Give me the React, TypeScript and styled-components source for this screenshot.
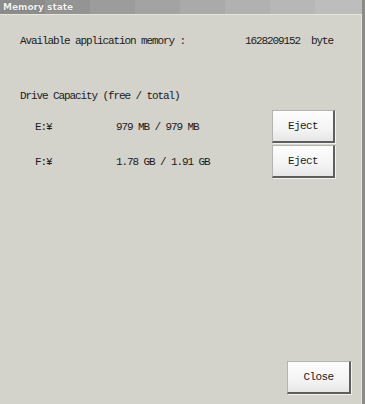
import React from 'react';
import styled, { createGlobalStyle } from 'styled-components';

const GlobalStyle = createGlobalStyle`
  html, body {
    margin: 0;
    padding: 0;
    background: #d4d3cb;
  }
`

const Window = styled.div`
  width: 365px;
  height: 404px;
  box-sizing: border-box;
  background: #d4d3cb;
  border-right: 3px solid #8a8a86;
  box-shadow: inset -1px 0 0 #e8e7e0;
  display: flex;
  flex-direction: column;
  font-family: "Liberation Mono", monospace;
  font-size: 11px;
  letter-spacing: -1.1px;
  color: #1a1a1a;
`

const TitleBar = styled.div`
  height: 14px;
  border-bottom: 1px solid #e6e5de;
  background: linear-gradient(to right,
    #8c8c8c 0 45px, #949494 45px 90px, #9c9c9c 90px 135px, #a3a3a3 135px 180px,
    #aaaaaa 180px 225px, #b1b1b1 225px 270px, #b7b7b7 270px 315px, #bdbdbd 315px);
  display: flex;
  align-items: center;
  padding-left: 3px;
  font-family: "DejaVu Sans", sans-serif;
  font-weight: bold;
  font-size: 9px;
  letter-spacing: 0;
  color: #f4f4f4;
  text-shadow: 0 0 1px #555;
`

const Body = styled.div`
  flex: 1;
  display: flex;
  flex-direction: column;
  padding: 19px 11px 8px 20px;
`

const MemoryRow = styled.div`
  display: flex;
  justify-content: space-between;
  height: 14px;
  line-height: 14px;
  padding-right: 18px;
`

const SectionTitle = styled.div`
  margin-top: 41px;
  height: 14px;
  line-height: 14px;
`

const DriveList = styled.div`
  display: flex;
  flex-direction: column;
  gap: 2px;
  margin-top: 7px;
`

const DriveRow = styled.div`
  display: flex;
  align-items: center;
  padding-left: 15px;
  padding-right: 16px;
`

const DriveName = styled.span`
  width: 81px;
`

const DriveSize = styled.span`
  flex: 1;
  padding-top: 1px;
`

const Button = styled.button<{ wide?: boolean }>`
  width: ${p => (p.wide ? '64px' : '63px')};
  height: 33px;
  box-sizing: border-box;
  padding: 0;
  font-family: "Liberation Mono", monospace;
  font-size: 11px;
  letter-spacing: -0.6px;
  color: #1a1a1a;
  background: linear-gradient(to bottom, #fdfdfd 0%, #f4f4f4 60%, #e6e6e6 100%);
  border-style: solid;
  border-width: 1px 2px 2px 1px;
  border-color: #b4b4b0 #5e5e5e #5e5e5e #b4b4b0;
  box-shadow: 1px 1px 0 #f2f2ee;
`

const Footer = styled.div`
  margin-top: auto;
  display: flex;
  justify-content: flex-end;
  padding-bottom: 2px;
`

const drives = [
  { name: 'E:¥', size: '979 MB / 979 MB' },
  { name: 'F:¥', size: '1.78 GB / 1.91 GB' },
];

const App: React.FC = () => {
  return (
    <>
      <GlobalStyle />
      <Window>
        <TitleBar>Memory state</TitleBar>
        <Body>
          <MemoryRow>
            <span>Available application memory :</span>
            <span>1628209152&nbsp;&nbsp;byte</span>
          </MemoryRow>
          <SectionTitle>Drive Capacity (free / total)</SectionTitle>
          <DriveList>
            {drives.map(d => (
              <DriveRow key={d.name}>
                <DriveName>{d.name}</DriveName>
                <DriveSize>{d.size}</DriveSize>
                <Button>Eject</Button>
              </DriveRow>
            ))}
          </DriveList>
          <Footer>
            <Button wide>Close</Button>
          </Footer>
        </Body>
      </Window>
    </>
  );
};

export default App;
